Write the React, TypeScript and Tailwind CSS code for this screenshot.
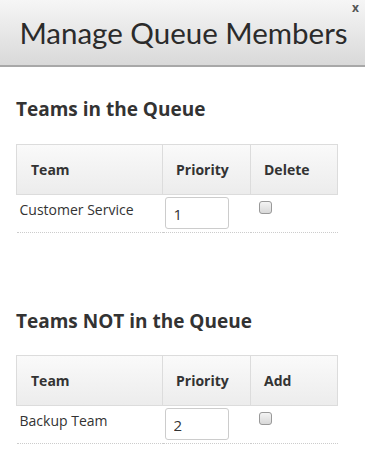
const font = { fontFamily: '"Open Sans", "DejaVu Sans", sans-serif' };

type Row = { team: string; priority: string };

function QueueTable({ action, row }: { action: string; row: Row }) {
  return (
    <table className="ml-[16px] w-[322px] border-collapse text-[14px] text-[#333]">
      <thead>
        <tr className="h-[50px] bg-gradient-to-b from-[#fafafa] to-[#ececec]">
          <th className="w-[146px] border border-[#dcdcdc] pl-[14px] text-left font-bold">Team</th>
          <th className="w-[88px] border border-[#dcdcdc] pl-[13px] text-left font-bold">Priority</th>
          <th className="border border-[#dcdcdc] pl-[13px] text-left font-bold">{action}</th>
        </tr>
      </thead>
      <tbody>
        <tr className="border-b border-dotted border-[#ccc]">
          <td className="h-[38px] pl-[3px] pb-[6px] align-top pt-[4px]">{row.team}</td>
          <td className="align-top pt-[2px] pl-[2px]">
            <input
              readOnly
              value={row.priority}
              className="h-[32px] w-[64px] rounded-[3px] border border-[#ccc] px-[8px] pt-[2px] text-[15px] text-[#333] outline-none"
            />
          </td>
          <td className="align-top pt-[6px] pl-[8px]">
            <span className="block h-[13px] w-[13px] rounded-[3px] border border-[#999] bg-gradient-to-b from-[#f4f4f4] to-[#d8d8d8]" />
          </td>
        </tr>
      </tbody>
    </table>
  );
}

export default function App() {
  return (
    <div className="relative h-[456px] w-[365px] bg-white" style={font}>
      <div className="flex h-[67px] items-center justify-center border-b-2 border-[#a8a8a8] bg-gradient-to-b from-[#f6f6f6] to-[#d9d9d9]">
        <h1
          className="whitespace-nowrap pl-[2px] text-[29.5px] leading-none text-[#2b2b2b]"
          style={{ fontFamily: 'Lato, "Open Sans", sans-serif' }}
        >
          Manage Queue Members
        </h1>
      </div>
      <span className="absolute right-[6px] top-[2px] text-[12px] font-bold leading-none text-[#555]">x</span>

      <h2 className="mt-[28px] ml-[16px] text-[19px] font-bold text-[#333]">Teams in the Queue</h2>
      <div className="mt-[20px]">
        <QueueTable action="Delete" row={{ team: 'Customer Service', priority: '1' }} />
      </div>

      <h2 className="mt-[74px] ml-[16px] text-[19px] font-bold text-[#333]">Teams NOT in the Queue</h2>
      <div className="mt-[20px]">
        <QueueTable action="Add" row={{ team: 'Backup Team', priority: '2' }} />
      </div>
    </div>
  );
}
